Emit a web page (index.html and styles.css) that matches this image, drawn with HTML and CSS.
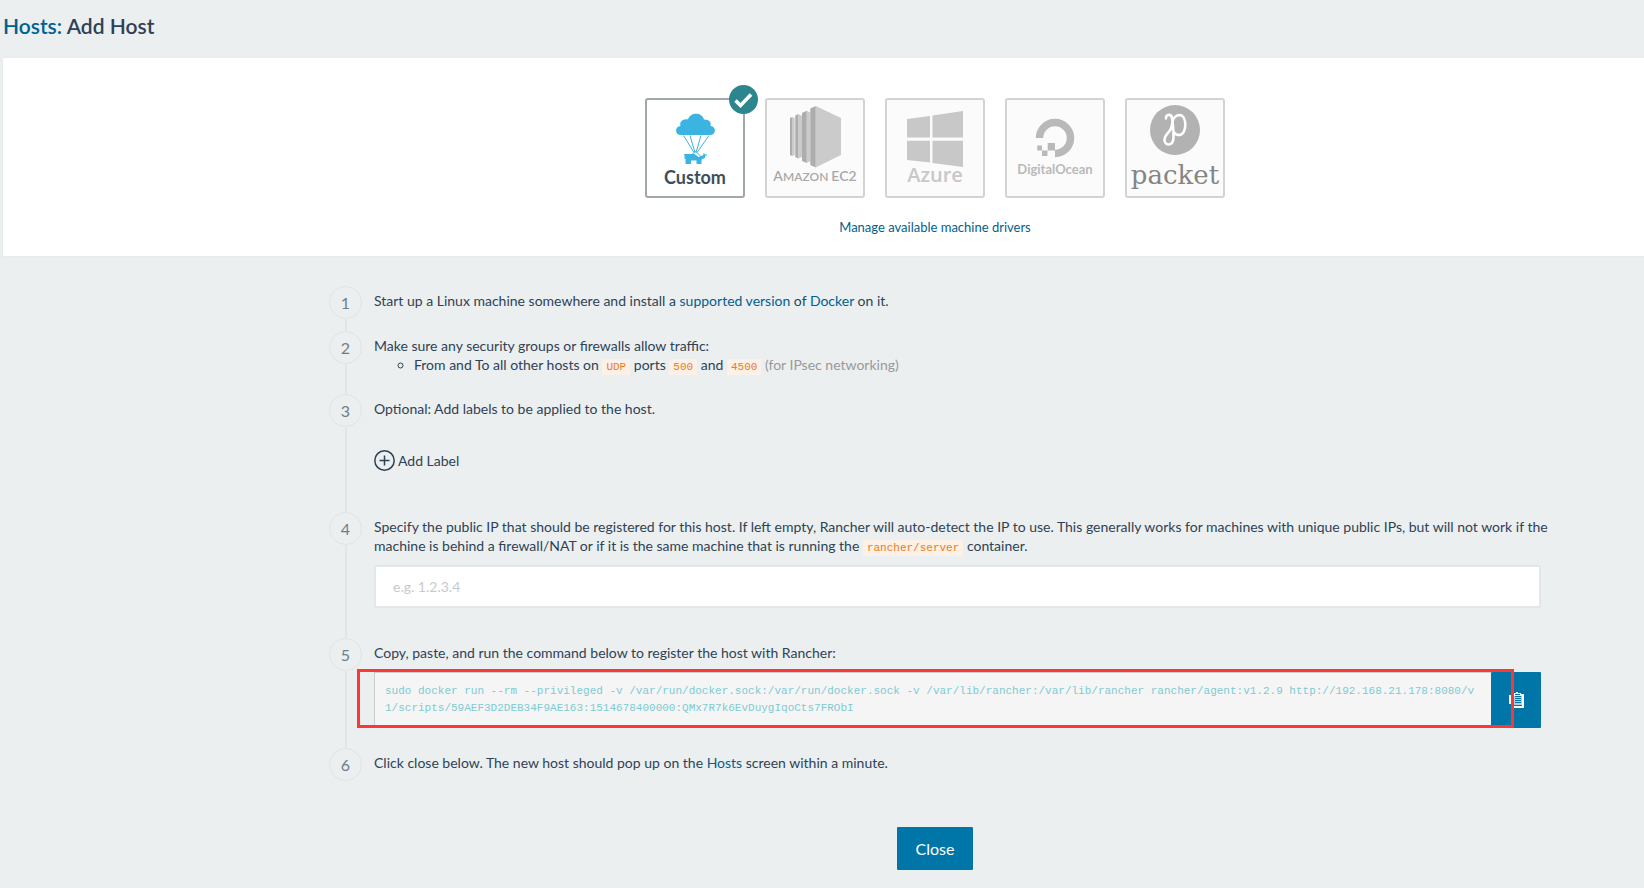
FILE: index.html
```html
<!DOCTYPE html>
<html lang="en">
<head>
<meta charset="utf-8">
<title>Hosts: Add Host</title>
<link rel="stylesheet" href="styles.css">
</head>
<body>
<header class="page-header">
  <h1 class="page-title"><a class="link" href="#">Hosts:</a> Add Host</h1>
</header>
<main>
  <section class="drivers">
    <div class="driver-list">
      <button class="driver driver-active" type="button" aria-pressed="true" aria-label="Custom">
        <svg class="driver-art" viewBox="0 0 100 100">
          <path fill="#3cb4e1" d="M36 37C29.500 37 29.500 28.500 35.500 28C34 23.500 38.500 20.500 43 21.500C45 14 57 13.500 59 21.500C65 21.500 66.500 25 65.500 28C71.500 28.500 71.500 37 65 37z"/>
          <path fill="none" stroke="#3cb4e1" d="M38.500 37.500 49 54.500M45 37.500l5 17M56 37.500l-5 17M64 37.500 52 54.500M51 53l-5 4M51.500 54l5 5"/>
          <path fill="#3cb4e1" d="M39 56h10.500l4 3 5-2-.5-1.500h1.500l.5 1h2v1h-1.500l-.5 2.500-2.500 1-1 .5v4.500h-5v-3.500h-5.500v3.500h-5.500v-5.500l-1 .5v-3z"/>
          <text class="art-custom" x="50" y="86">Custom</text>
        </svg>
        <svg class="badge" viewBox="0 0 29 29">
          <circle cx="14.500" cy="14.500" r="14.500" fill="#2d868d"/>
          <path d="M6.500 15.500l5 5L22 9.500" fill="none" stroke="#fff" stroke-width="3.600"/>
        </svg>
      </button>
      <button class="driver" type="button" aria-pressed="false" aria-label="Amazon EC2">
        <svg class="driver-art" viewBox="0 0 100 100">
          <path fill="#cbcbcb" d="M27.300 19l2.400 1v37l-2.400 1zM33.300 16l3.700 2v41l-3.700 1.500zM41.700 12.700l3.600 1.800v48.500l-3.600 2zM50.700 8 76 20v37L50.700 69.500z"/>
          <path fill="#adadad" d="M25 20l2.300-1v39l-2.300-1zM30.300 17.500l3-1.500v44.500l-3-1.500zM37 15l4.700-2.300V65L37 63zM45.300 10.500l5.400-2.500v61.500l-5.400-2.500z"/>
          <text class="art-amazon" x="50" y="83"><tspan class="art-cap">A</tspan>MAZON <tspan class="art-cap">EC2</tspan></text>
        </svg>
      </button>
      <button class="driver" type="button" aria-pressed="false" aria-label="Azure">
        <svg class="driver-art" viewBox="0 0 100 100">
          <path fill="#c8c8c8" d="M22 21l23-3v21.500H22zM47.500 17.500 78 13v26.500H47.500zM22 42.700h23V64.500L22 62zM47.500 42.700H78V69l-30.500-4z"/>
          <text class="art-azure" x="50" y="84">Azure</text>
        </svg>
      </button>
      <button class="driver" type="button" aria-pressed="false" aria-label="DigitalOcean">
        <svg class="driver-art" viewBox="0 0 100 100">
          <path fill="none" stroke="#b9b9b9" stroke-width="7.500" d="M34.500 40a15.500 15.500 0 1 1 15.500 15.500"/>
          <path fill="#b9b9b9" d="M42.700 45H50v7.500h-7.300zM37 52.500h5.500V58H37zM32.300 47.500H37v5h-4.700z"/>
          <text class="art-ocean" x="50" y="76">DigitalOcean</text>
        </svg>
      </button>
      <button class="driver" type="button" aria-pressed="false" aria-label="Packet">
        <svg class="driver-art" viewBox="0 0 100 100">
          <circle cx="50" cy="32" r="25" fill="#b2b2b2"/>
          <path fill="none" stroke="#fff" stroke-width="2.600" stroke-linecap="round" d="M41 20.500C40.500 16 46.500 15.500 47 20C47.500 25 49 31 48.500 40C48 48.500 39.500 48 39.500 42C39.500 36 46 34 46.500 29C47 21 50.500 17 54.500 17C62.500 17.500 62 36.500 54.500 37C52 37 50 36 49 34.500"/>
          <text class="art-packet" x="50" y="86">packet</text>
        </svg>
      </button>
    </div>
    <a class="link drivers-link" href="#">Manage available machine drivers</a>
  </section>

  <ol class="steps">
    <li class="step">
      <span class="step-number">1</span>
      <div class="step-body">Start up a Linux machine somewhere and install a <a class="link" href="#">supported version</a> of <a class="link" href="#">Docker</a> on it.</div>
    </li>
    <li class="step">
      <span class="step-number">2</span>
      <div class="step-body">Make sure any security groups or firewalls allow traffic:
        <ul class="ports">
          <li>From and To all other hosts on <code class="code">UDP</code> ports <code class="code">500</code> and <code class="code">4500</code> <span class="muted">(for IPsec networking)</span></li>
        </ul>
      </div>
    </li>
    <li class="step">
      <span class="step-number">3</span>
      <div class="step-body">Optional: Add labels to be applied to the host.
        <div class="label-row">
          <button class="add-label" type="button">
            <svg class="add-icon" viewBox="0 0 21 21"><circle cx="10.500" cy="10.500" r="9.700"/><path d="M10.500 5.500v10M5.500 10.500h10"/></svg>
            Add Label
          </button>
        </div>
      </div>
    </li>
    <li class="step">
      <span class="step-number">4</span>
      <div class="step-body">
        <label class="ip-label" for="public-ip">Specify the public IP that should be registered for this host. If left empty, Rancher will auto-detect the IP to use. This generally works for machines with unique public IPs, but will not work if the machine is behind a firewall/NAT or if it is the same machine that is running the <code class="code">rancher/server</code> container.</label>
        <input class="ip-input" id="public-ip" type="text" placeholder="e.g. 1.2.3.4">
      </div>
    </li>
    <li class="step">
      <span class="step-number">5</span>
      <div class="step-body">Copy, paste, and run the command below to register the host with Rancher:
        <div class="command">
          <pre class="command-text">sudo docker run --rm --privileged -v /var/run/docker.sock:/var/run/docker.sock -v /var/lib/rancher:/var/lib/rancher rancher/agent:v1.2.9 http://192.168.21.178:8080/v1/scripts/59AEF3D2DEB34F9AE163:1514678400000:QMx7R7k6EvDuygIqoCts7FRObI</pre>
          <button class="copy" type="button" aria-label="Copy to clipboard">
            <svg class="copy-icon" viewBox="0 0 16 16">
              <path fill="#fff" d="M1 3h4V1h3V0h2v1h3v1h3v14H4v-4H1z"/>
              <path fill="#a9cfe2" d="M6 4h8v10H6z"/>
              <path fill="#0075a8" d="M7 2h5v1H7z"/>
              <path stroke="#0075a8" stroke-width="1" d="M7 4.500h6M7 6.500h6M7 8.500h6M7 10.500h6M6 13.500h8"/>
            </svg>
          </button>
          <span class="highlight"></span>
        </div>
      </div>
    </li>
    <li class="step">
      <span class="step-number">6</span>
      <div class="step-body">Click close below. The new host should pop up on the <a class="link" href="#">Hosts</a> screen within a minute.</div>
    </li>
  </ol>
  <footer class="actions"><button class="close" type="button">Close</button></footer>
</main>
</body>
</html>
```
FILE: styles.css
```css
* { box-sizing: border-box; }
body {
  margin: 0;
  background: #ebeff0;
  color: #2f4255;
  font: 14px/19px Lato, sans-serif;
}
button, input { font: inherit; color: inherit; }
button { border: 0; padding: 0; background: none; cursor: pointer; }
.link { color: #00618f; text-decoration: none; }

.page-header { padding: 14px 3px 20px; }
.page-title { margin: 0; font-size: 21px; line-height: 24px; font-weight: 600; }

.drivers {
  margin-left: 3px;
  padding: 40px 0 19px 223px;
  background: #fff;
  box-shadow: 0 0 2px #dfe3e4;
  display: flex;
  flex-direction: column;
  align-items: center;
  gap: 20px;
}
.driver-list { display: flex; gap: 20px; }
.driver {
  position: relative;
  width: 100px;
  height: 100px;
  border: 2px solid #d3d3d3;
  border-radius: 3px;
  background: #fbfbfb;
}
.driver-active { border-color: #a1a8ac; background: #fff; }
.driver-art { display: block; width: 100px; height: 100px; margin: -2px; }
.driver-art text { text-anchor: middle; }
.badge { position: absolute; top: -15px; right: -15px; width: 29px; height: 29px; }
.art-custom { font: 700 18px Lato, sans-serif; fill: #3d4f5b; }
.art-amazon { font: 600 12px Lato, sans-serif; fill: #a9a9a9; }
.art-cap { font-size: 14px; }
.art-azure { font: 600 20px "Open Sans", sans-serif; fill: #c8c8c8; }
.art-ocean { font: 700 13px Lato, sans-serif; fill: #b9b9b9; }
.art-packet { font: 26px "DejaVu Serif", serif; fill: #858585; }
.drivers-link { font-size: 13px; }

.steps { list-style: none; margin: 0; padding: 30px 103px 0 329px; }
.step { position: relative; display: flex; gap: 12px; min-height: 45px; }
.step:not(:last-child)::before {
  content: "";
  position: absolute;
  left: 16px;
  top: 33px;
  bottom: 0;
  width: 2px;
  background: #e2e6e7;
}
.step-number {
  flex: none;
  width: 33px;
  height: 33px;
  border: 1px solid #e0e4e5;
  border-radius: 50%;
  color: #6c8089;
  font-size: 16px;
  line-height: 32px;
  text-align: center;
}
.step-body { flex: 1; min-width: 0; padding: 5px 0 19px; }
.ports { list-style: circle; margin: 0; padding-left: 40px; }
.code {
  padding: 2px 4px;
  border-radius: 1px;
  background: #fdf0e7;
  color: #e67e22;
  font: 11px/15px "Liberation Mono", monospace;
}
.muted { color: #999; }
.label-row { padding: 32px 0 22px; }
.add-label { display: flex; align-items: center; gap: 3px; height: 21px; }
.add-icon { width: 21px; height: 21px; fill: none; stroke: #2f4255; stroke-width: 1.500; }
.ip-label { display: block; margin-right: -12px; }
.ip-input {
  display: block;
  width: 100%;
  height: 43px;
  margin: 9px 0 11px;
  padding: 0 17px;
  border: 2px solid #e3e7e8;
  border-radius: 2px;
  background: #fff;
}
.ip-input::placeholder { color: #c6cace; }
.command { position: relative; display: flex; margin: 10px 0 1px; }
.command-text {
  flex: 1;
  margin: 0;
  padding: 10px;
  border: 1px solid #ccc;
  border-right: 0;
  background: #f5f5f5;
  color: #7ecbd2;
  font: 11px/17px "Liberation Mono", monospace;
  white-space: pre-wrap;
  word-break: break-all;
}
.copy {
  width: 50px;
  display: flex;
  align-items: center;
  justify-content: center;
  border-radius: 1px;
  background: #0075a8;
}
.copy-icon { width: 16px; height: 16px; }
.highlight { position: absolute; inset: -3px 27px 0 -17px; border: 3px solid #fb3838; pointer-events: none; }

.actions { display: flex; justify-content: center; padding: 34px 0 18px 226px; }
.close { padding: 12px 19px; border-radius: 1px; background: #0075a8; color: #fff; font-size: 16px; }
```
